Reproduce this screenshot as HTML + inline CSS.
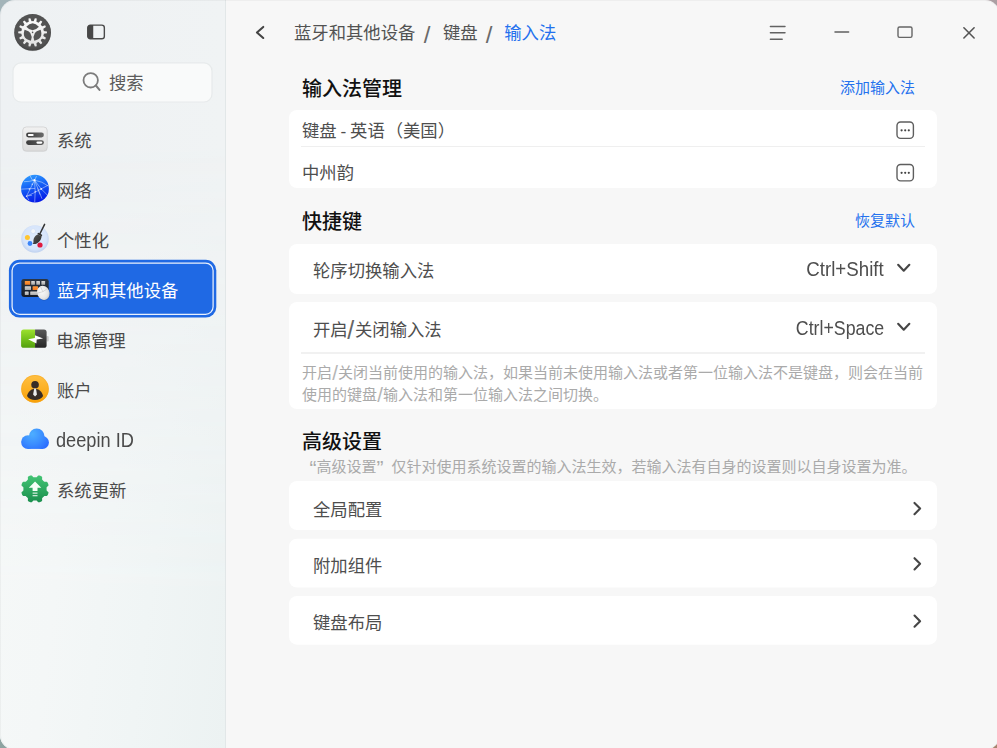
<!DOCTYPE html>
<html lang="zh-CN">
<head>
<meta charset="utf-8">
<title>控制中心</title>
<style>
*{box-sizing:border-box;margin:0;padding:0}
html,body{width:997px;height:748px;overflow:hidden}
body{position:relative;background:#a9a9a9;font-family:"Liberation Sans","Noto Sans CJK SC",sans-serif;color:#414141;font-size:17.33px}
.abs{position:absolute}
#sidebar{position:absolute;left:0;top:0;width:226px;height:750.3px;border-radius:15px 0 0 15px;background:linear-gradient(90deg,#eef1f3,#f0f3f4);border-right:1px solid #e2e7e8;overflow:hidden}
#sidebar i{position:absolute;left:0;top:0;width:225px;height:100%;background:linear-gradient(97deg,#f6f9f8 0%,#f4f7f7 40%,#f0f5f5 70%,#ecf2f2 100%);-webkit-mask-image:linear-gradient(to bottom,transparent 18%,#000 80%);mask-image:linear-gradient(to bottom,transparent 18%,#000 80%)}
#main{position:absolute;left:226px;top:0;width:774px;height:750.3px;border-radius:0 15px 15px 0;background:#f7f7f7}
.t{position:absolute;white-space:nowrap;line-height:24px;height:24px}
.nav{left:57px;font-size:17.33px;color:#4a4a4a}
.card{position:absolute;left:289px;width:648px;background:#fff;border-radius:8px}
.h{font-weight:500;font-size:20px;color:#111;left:302px}
.lnk{font-size:15px;color:#2471ee}
.row{font-size:17.33px;color:#4e4e4e}
.desc{font-size:15px;color:#aaa}
.bs{display:inline-block;font-size:24px;line-height:0;position:relative;top:3.5px;color:#6a6a6a}
.lat{transform-origin:right 19px}
.q{display:inline-block;width:15px;font-size:21px;line-height:0;position:relative;top:2.5px}
.sl{display:inline-block;font-size:20.5px;line-height:0;position:relative;top:2.2px;margin:0 .15px;color:#b6b6b6}
.line{position:absolute;height:1px;background:#ececec}
</style>
</head>
<body>
<!-- window corners (desktop wallpaper showing through) -->
<div class="abs" style="left:0;top:0;width:30px;height:30px;background:#a3b4b9"></div>
<div class="abs" style="right:0;top:0;width:30px;height:30px;background:#ab9fa3"></div>
<div class="abs" style="left:0;bottom:0;width:30px;height:30px;background:#8da3a1"></div>
<div class="abs" style="right:0;bottom:0;width:30px;height:30px;background:#a8846f"></div>
<div id="sidebar"><i></i></div>
<div id="main"></div>
<div class="abs" style="left:0;top:0;width:1000px;height:750.3px;border-radius:15px;border:1px solid rgba(0,0,0,.035)"></div>

<!-- sidebar toggle -->
<svg class="abs" style="left:87px;top:24px" width="20" height="17" viewBox="0 -0.4 20 17">
  <rect x="0.75" y="0.75" width="16.6" height="13.6" rx="2.6" fill="none" stroke="#4a4a4a" stroke-width="1.4"/>
  <path d="M0.75 3.2 a2.5 2.5 0 0 1 2.5-2.5 h3 v13.6 h-3 a2.5 2.5 0 0 1-2.5-2.5z" fill="#474747"/>
</svg>

<!-- search -->
<svg class="abs" style="left:0px;top:55px" width="226" height="55" viewBox="0 55 226 55"><rect x="13" y="62.9" width="199" height="39.1" rx="8" fill="#f9fafa" stroke="#e7eaeb" stroke-width="1.2"/></svg>
<svg class="abs" style="left:80px;top:70px" width="22" height="22" viewBox="0 0 22 22"><circle cx="10.7" cy="10.3" r="7.2" fill="none" stroke="#7c7c7c" stroke-width="1.8"/><path d="M15.9 15.5 L19.5 19.9" stroke="#7c7c7c" stroke-width="2" stroke-linecap="round"/></svg>
<div class="t" style="left:109px;top:71px;font-size:17.33px;color:#5c5c5c">搜索</div>

<!-- nav -->
<svg class="abs" style="left:0px;top:250px" width="226" height="80" viewBox="0 250 226 80">
<rect x="8.9" y="259.8" width="207.4" height="57.8" rx="10.6" fill="#1f69e4"/>
<rect x="12.1" y="263" width="201" height="51.4" rx="7.6" fill="none" stroke="#fff" stroke-opacity="0.9" stroke-width="1.25"/>
</svg>

<div class="t nav" style="top:129px">系统</div>
<div class="t nav" style="top:179px">网络</div>
<div class="t nav" style="top:229px">个性化</div>
<div class="t nav" style="top:279px;color:#fff">蓝牙和其他设备</div>
<div class="t nav" style="top:329px;left:56.3px">电源管理</div>
<div class="t nav" style="top:379px">账户</div>
<div class="t nav" style="top:429px;left:56.4px;transform:scale(1.05,1.2);transform-origin:left 18px">deepin ID</div>
<div class="t nav" style="top:479px">系统更新</div>

<!-- ICONS-START -->
<svg class="abs" style="left:12px;top:12px" width="41" height="41" viewBox="-0.6 -0.4 41 41">
<defs><radialGradient id="ag" cx="50%" cy="45%" r="55%"><stop offset="0" stop-color="#595959"/><stop offset="0.85" stop-color="#525252"/><stop offset="1" stop-color="#444"/></radialGradient>
<linearGradient id="aw" x1="0" y1="0" x2="0" y2="1"><stop offset="0" stop-color="#fbfbfb"/><stop offset="1" stop-color="#e4e4e4"/></linearGradient></defs>
<circle cx="20" cy="20.6" r="18.3" fill="#000" opacity="0.10"/>
<circle cx="20" cy="20" r="18.4" fill="url(#ag)"/>
<path d="M20.98 9.14 L22.25 5.78 L24.14 6.21 L23.83 9.80 L25.59 10.64 L28.20 8.16 L29.72 9.37 L27.88 12.47 L29.10 14.00 L32.52 12.89 L33.36 14.64 L30.37 16.63 L30.80 18.54 L34.37 19.03 L34.37 20.97 L30.80 21.46 L30.37 23.37 L33.36 25.36 L32.52 27.11 L29.10 26.00 L27.88 27.53 L29.72 30.63 L28.20 31.84 L25.59 29.36 L23.83 30.20 L24.14 33.79 L22.25 34.22 L20.98 30.86 L19.02 30.86 L17.75 34.22 L15.86 33.79 L16.17 30.20 L14.41 29.36 L11.80 31.84 L10.28 30.63 L12.12 27.53 L10.90 26.00 L7.48 27.11 L6.64 25.36 L9.63 23.37 L9.20 21.46 L5.63 20.97 L5.63 19.03 L9.20 18.54 L9.63 16.63 L6.64 14.64 L7.48 12.89 L10.90 14.00 L12.12 12.47 L10.28 9.37 L11.80 8.16 L14.41 10.64 L16.17 9.80 L15.86 6.21 L17.75 5.78 L19.02 9.14Z" fill="url(#aw)"/>
<circle cx="20" cy="20" r="11.2" fill="url(#aw)"/>
<g fill="#555">
<path d="M13.7 14.4 Q20 7.2 26.3 14.4 Q20 21.4 13.7 14.4Z"/>
<path d="M13.7 14.4 Q20 7.2 26.3 14.4 Q20 21.4 13.7 14.4Z" transform="rotate(120 20 20)"/>
<path d="M13.7 14.4 Q20 7.2 26.3 14.4 Q20 21.4 13.7 14.4Z" transform="rotate(240 20 20)"/>
<circle cx="20" cy="20" r="0.8"/>
</g>
</svg>
<svg class="abs" style="left:20px;top:124px" width="30" height="30" viewBox="0 0 30 30">
<defs><linearGradient id="sg" x1="0" y1="0" x2="0" y2="1"><stop offset="0" stop-color="#f1f1f1"/><stop offset="1" stop-color="#dcdcdc"/></linearGradient>
<linearGradient id="sp" x1="0" y1="0" x2="1" y2="0"><stop offset="0" stop-color="#3c3c3c"/><stop offset="1" stop-color="#6a6a6a"/></linearGradient>
<linearGradient id="sp2" x1="0" y1="0" x2="1" y2="0"><stop offset="0" stop-color="#3c3c3c"/><stop offset="1" stop-color="#5c5c5c"/></linearGradient></defs>
<rect x="2.4" y="2.9" width="25.2" height="24.8" rx="4" fill="#000" opacity="0.07"/>
<rect x="2.75" y="2.95" width="24.4" height="24.1" rx="3.6" fill="url(#sg)" stroke="#cdcdcd" stroke-width="0.7"/>
<rect x="6.1" y="8.6" width="17.8" height="4.8" rx="2.4" fill="url(#sp)"/>
<rect x="7.8" y="9.9" width="5.9" height="2.2" rx="1.1" fill="#fff"/>
<rect x="6.1" y="16.2" width="17.8" height="4.8" rx="2.4" fill="url(#sp2)"/>
<rect x="16.4" y="17.5" width="5.9" height="2.2" rx="1.1" fill="#fff"/>
</svg>
<svg class="abs" style="left:20px;top:173px" width="31" height="31" viewBox="0 -0.7 31 31">
<defs><linearGradient id="ng" x1="0.3" y1="0" x2="0.6" y2="1"><stop offset="0" stop-color="#2f9bff"/><stop offset="0.45" stop-color="#135cf5"/><stop offset="1" stop-color="#0316e6"/></linearGradient>
<clipPath id="nc"><circle cx="15" cy="15" r="13.9"/></clipPath></defs>
<circle cx="15" cy="15" r="13.9" fill="url(#ng)"/>
<g clip-path="url(#nc)" fill="none" stroke="#fff" stroke-width="0.55" opacity="0.8">
<path d="M14.5 6.5 L6.5 22.5"/>
<path d="M14.5 6.5 L22 25"/>
<path d="M14.5 6.5 L15.2 18 L14.7 29"/>
<path d="M14.5 6.5 L21.2 15.2 L28 22"/>
<path d="M21.2 15.2 Q13 20 6.5 22.5"/>
<path d="M21.2 15.2 L29 11"/>
<path d="M14.5 6.5 Q22 7.5 28.5 12.5"/>
<path d="M1 15.5 Q8 15 15 14.8"/>
<path d="M10 2 L12.5 6.5 L14.5 6.5 L16.5 2.5"/>
<path d="M4 8 Q9 8 14.5 6.5"/>
<path d="M6.5 22.5 L9 26.5"/>
<path d="M6.5 22.5 L12 21.5"/>
<path d="M17.6 14.5 L20 21"/>
</g>
<g fill="#fff"><circle cx="14.5" cy="6.5" r="1.1" opacity="0.95"/><circle cx="21.2" cy="15.2" r="0.9" opacity="0.85"/><circle cx="9.4" cy="15.3" r="0.8" opacity="0.8"/><circle cx="12.2" cy="10.6" r="0.7" opacity="0.7"/><circle cx="15.2" cy="18" r="0.7" opacity="0.7"/><circle cx="6.5" cy="22.5" r="0.7" opacity="0.7"/></g>
</svg>
<svg class="abs" style="left:20px;top:222px" width="30" height="32" viewBox="0 0 30 32">
<defs><radialGradient id="pg" cx="50%" cy="45%" r="52%"><stop offset="0" stop-color="#e0ecfd"/><stop offset="0.8" stop-color="#d7e5fb"/><stop offset="1" stop-color="#c4d5f1"/></radialGradient>
<linearGradient id="pb" x1="0" y1="0" x2="1" y2="1"><stop offset="0" stop-color="#555"/><stop offset="1" stop-color="#2c2c2c"/></linearGradient></defs>
<circle cx="15" cy="17" r="13.8" fill="url(#pg)"/>
<circle cx="13.2" cy="9.2" r="2.4" fill="#f4f7fb" stroke="#cbd9f0" stroke-width="0.5"/>
<circle cx="7.4" cy="15.4" r="2.5" fill="#ffc530"/>
<circle cx="10" cy="21.5" r="2.4" fill="#3b84f8"/>
<circle cx="20" cy="23" r="2.6" fill="#e01a3f"/>
<path d="M24.6 2.4 L19.8 12" stroke="#333" stroke-width="1.5" stroke-linecap="round"/>
<path d="M18.4 11.8 L21.3 13.2" stroke="#333" stroke-width="1.8" stroke-linecap="round"/>
<path d="M18 12.4 C14.2 13.6 13.2 17.4 13.5 20 C13.4 21 12.7 21.5 13 21.9 C17.3 22.6 21 19.2 21.6 14.2 Z" fill="url(#pb)"/>
</svg>
<svg class="abs" style="left:20px;top:276px" width="32" height="26" viewBox="0 0 32 26">
<defs><linearGradient id="kg" x1="0" y1="0" x2="0" y2="1"><stop offset="0" stop-color="#2c3644"/><stop offset="1" stop-color="#161c26"/></linearGradient>
<linearGradient id="ko" x1="0" y1="0" x2="0" y2="1"><stop offset="0" stop-color="#ff9a3c"/><stop offset="1" stop-color="#f47a20"/></linearGradient>
<linearGradient id="kk" x1="0" y1="0" x2="0" y2="1"><stop offset="0" stop-color="#d9d9d9"/><stop offset="1" stop-color="#a9a9a9"/></linearGradient>
<radialGradient id="km" cx="40%" cy="35%" r="70%"><stop offset="0" stop-color="#fbfbfb"/><stop offset="0.7" stop-color="#e6e6e6"/><stop offset="1" stop-color="#c9c9c9"/></radialGradient></defs>
<rect x="1.4" y="2.9" width="27.3" height="18.1" rx="2.4" fill="url(#kg)"/>
<rect x="4.8" y="5" width="5.4" height="3.8" rx="0.5" fill="url(#ko)"/>
<rect x="11.2" y="5" width="3.7" height="3.8" rx="0.5" fill="url(#kk)"/>
<rect x="16.3" y="5" width="3.7" height="3.8" rx="0.5" fill="url(#kk)"/>
<rect x="21.4" y="5" width="3.7" height="3.8" rx="0.5" fill="url(#kk)"/>
<rect x="4.8" y="10.2" width="6.2" height="3.8" rx="0.5" fill="url(#kk)"/>
<rect x="12.6" y="10.2" width="5.4" height="3.8" rx="0.5" fill="url(#ko)"/>
<rect x="4.8" y="15.5" width="3.9" height="3.6" rx="0.5" fill="url(#kk)"/>
<rect x="10.2" y="15.5" width="8" height="3.6" rx="0.5" fill="url(#kk)"/>
<g transform="rotate(-24 23.3 16.8)">
<ellipse cx="23.3" cy="17.4" rx="6.2" ry="7.4" fill="#000" opacity="0.16"/>
<ellipse cx="23.3" cy="16.8" rx="6.1" ry="7.3" fill="url(#km)"/>
<path d="M17.4 14.6 Q23.3 16.6 29.2 14.6 M23.3 9.6 V15.6" stroke="#c4c4c4" stroke-width="0.55" fill="none"/>
</g>
</svg>
<svg class="abs" style="left:20px;top:328px" width="30" height="22" viewBox="0 0 30 22">
<defs><linearGradient id="bg1" x1="0" y1="0" x2="0" y2="1"><stop offset="0" stop-color="#a2e531"/><stop offset="0.5" stop-color="#74c11b"/><stop offset="1" stop-color="#4c970c"/></linearGradient>
<linearGradient id="bg2" x1="0" y1="0" x2="0" y2="1"><stop offset="0" stop-color="#5d5d5d"/><stop offset="1" stop-color="#1f1f1f"/></linearGradient>
<clipPath id="bc"><rect x="1.1" y="1.6" width="25.5" height="18.2" rx="2.6"/></clipPath></defs>
<rect x="26.3" y="7.9" width="2.4" height="5.6" rx="1" fill="#c8c8c8"/>
<g clip-path="url(#bc)"><rect x="0" y="0" width="15.05" height="22" fill="url(#bg1)"/><rect x="15.05" y="0" width="13" height="22" fill="url(#bg2)"/></g>
<path d="M15.05 7.2 L23.1 10.4 L16.7 11.4 L16.4 15.5 L8.1 11.3 L14.9 9.9 Z" fill="#fff"/>
</svg>
<svg class="abs" style="left:20px;top:373px" width="31" height="31" viewBox="0 -0.9 31 31">
<defs><linearGradient id="acg" x1="0" y1="0" x2="0" y2="1"><stop offset="0" stop-color="#ffc043"/><stop offset="1" stop-color="#f9a106"/></linearGradient></defs>
<circle cx="15" cy="15" r="13.8" fill="url(#acg)"/>
<circle cx="15" cy="15" r="13.5" fill="none" stroke="#f2a21c" stroke-width="0.6" opacity="0.7"/>
<circle cx="15.05" cy="10.8" r="3.8" fill="#382d27"/>
<path d="M7 22.2 C8 17.6 11.5 14.9 15.05 14.9 C18.6 14.9 22.1 17.6 23.1 22.2 C21.6 24.7 18.4 26.1 15.05 26.1 C11.7 26.1 8.5 24.7 7 22.2 Z" fill="#382d27"/>
<path d="M14.2 14.6 L15.9 14.6 L17 20.6 L15.05 22.6 L13.1 20.6 Z" fill="#ececec"/>
</svg>
<svg class="abs" style="left:20px;top:427px" width="30" height="24" viewBox="0 0 30 24">
<defs><radialGradient id="cg" gradientUnits="userSpaceOnUse" cx="12.5" cy="7" r="21"><stop offset="0" stop-color="#4daeff"/><stop offset="0.5" stop-color="#3b8dff"/><stop offset="1" stop-color="#2664ff"/></radialGradient></defs>
<g fill="url(#cg)"><circle cx="7.95" cy="15.05" r="6.85"/><circle cx="16.7" cy="9.35" r="7.75"/><circle cx="22.5" cy="15.45" r="6.45"/><rect x="7.95" y="12" width="14.55" height="9.9"/></g>
</svg>
<svg class="abs" style="left:20px;top:473px" width="31" height="31" viewBox="0 -0.9 31 31">
<defs><linearGradient id="ug" x1="0" y1="0" x2="0" y2="1"><stop offset="0" stop-color="#43c474"/><stop offset="1" stop-color="#1b8f4e"/></linearGradient></defs>
<path d="M15.00 3.40 L15.30 3.40 L15.61 3.41 L15.91 3.41 L16.22 3.40 L16.54 3.34 L16.88 3.14 L17.28 2.69 L17.74 2.10 L18.20 1.69 L18.61 1.54 L18.99 1.54 L19.35 1.61 L19.70 1.72 L20.05 1.84 L20.40 1.97 L20.73 2.12 L21.07 2.28 L21.39 2.46 L21.70 2.66 L21.97 2.93 L22.15 3.33 L22.18 3.94 L22.09 4.69 L22.06 5.29 L22.16 5.67 L22.34 5.94 L22.55 6.16 L22.77 6.37 L22.99 6.58 L23.20 6.80 L23.42 7.01 L23.63 7.23 L23.84 7.45 L24.06 7.66 L24.33 7.84 L24.71 7.94 L25.31 7.91 L26.06 7.82 L26.67 7.85 L27.07 8.03 L27.34 8.30 L27.54 8.61 L27.72 8.93 L27.88 9.27 L28.03 9.60 L28.16 9.95 L28.28 10.30 L28.39 10.65 L28.46 11.01 L28.46 11.39 L28.31 11.80 L27.90 12.26 L27.31 12.72 L26.86 13.12 L26.66 13.46 L26.60 13.78 L26.59 14.09 L26.59 14.39 L26.60 14.70 L26.60 15.00 L26.60 15.30 L26.59 15.61 L26.59 15.91 L26.60 16.22 L26.66 16.54 L26.86 16.88 L27.31 17.28 L27.90 17.74 L28.31 18.20 L28.46 18.61 L28.46 18.99 L28.39 19.35 L28.28 19.70 L28.16 20.05 L28.03 20.40 L27.88 20.73 L27.72 21.07 L27.54 21.39 L27.34 21.70 L27.07 21.97 L26.67 22.15 L26.06 22.18 L25.31 22.09 L24.71 22.06 L24.33 22.16 L24.06 22.34 L23.84 22.55 L23.63 22.77 L23.42 22.99 L23.20 23.20 L22.99 23.42 L22.77 23.63 L22.55 23.84 L22.34 24.06 L22.16 24.33 L22.06 24.71 L22.09 25.31 L22.18 26.06 L22.15 26.67 L21.97 27.07 L21.70 27.34 L21.39 27.54 L21.07 27.72 L20.73 27.88 L20.40 28.03 L20.05 28.16 L19.70 28.28 L19.35 28.39 L18.99 28.46 L18.61 28.46 L18.20 28.31 L17.74 27.90 L17.28 27.31 L16.88 26.86 L16.54 26.66 L16.22 26.60 L15.91 26.59 L15.61 26.59 L15.30 26.60 L15.00 26.60 L14.70 26.60 L14.39 26.59 L14.09 26.59 L13.78 26.60 L13.46 26.66 L13.12 26.86 L12.72 27.31 L12.26 27.90 L11.80 28.31 L11.39 28.46 L11.01 28.46 L10.65 28.39 L10.30 28.28 L9.95 28.16 L9.60 28.03 L9.27 27.88 L8.93 27.72 L8.61 27.54 L8.30 27.34 L8.03 27.07 L7.85 26.67 L7.82 26.06 L7.91 25.31 L7.94 24.71 L7.84 24.33 L7.66 24.06 L7.45 23.84 L7.23 23.63 L7.01 23.42 L6.80 23.20 L6.58 22.99 L6.37 22.77 L6.16 22.55 L5.94 22.34 L5.67 22.16 L5.29 22.06 L4.69 22.09 L3.94 22.18 L3.33 22.15 L2.93 21.97 L2.66 21.70 L2.46 21.39 L2.28 21.07 L2.12 20.73 L1.97 20.40 L1.84 20.05 L1.72 19.70 L1.61 19.35 L1.54 18.99 L1.54 18.61 L1.69 18.20 L2.10 17.74 L2.69 17.28 L3.14 16.88 L3.34 16.54 L3.40 16.22 L3.41 15.91 L3.41 15.61 L3.40 15.30 L3.40 15.00 L3.40 14.70 L3.41 14.39 L3.41 14.09 L3.40 13.78 L3.34 13.46 L3.14 13.12 L2.69 12.72 L2.10 12.26 L1.69 11.80 L1.54 11.39 L1.54 11.01 L1.61 10.65 L1.72 10.30 L1.84 9.95 L1.97 9.60 L2.12 9.27 L2.28 8.93 L2.46 8.61 L2.66 8.30 L2.93 8.03 L3.33 7.85 L3.94 7.82 L4.69 7.91 L5.29 7.94 L5.67 7.84 L5.94 7.66 L6.16 7.45 L6.37 7.23 L6.58 7.01 L6.80 6.80 L7.01 6.58 L7.23 6.37 L7.45 6.16 L7.66 5.94 L7.84 5.67 L7.94 5.29 L7.91 4.69 L7.82 3.94 L7.85 3.33 L8.03 2.93 L8.30 2.66 L8.61 2.46 L8.93 2.28 L9.27 2.12 L9.60 1.97 L9.95 1.84 L10.30 1.72 L10.65 1.61 L11.01 1.54 L11.39 1.54 L11.80 1.69 L12.26 2.10 L12.72 2.69 L13.12 3.14 L13.46 3.34 L13.78 3.40 L14.09 3.41 L14.39 3.41 L14.70 3.40Z" fill="url(#ug)"/>
<path d="M15.05 7.5 L21.3 13.8 L17.5 13.8 L17.5 17.1 L12.6 17.1 L12.6 13.8 L8.8 13.8 Z" fill="#f6fff8"/>
<rect x="12.6" y="18.6" width="4.9" height="1.3" fill="#fff" opacity="0.75"/>
<rect x="12.6" y="21.1" width="4.9" height="1.3" fill="#fff" opacity="0.75"/>
</svg>
<!-- ICONS-END -->

<!-- title bar -->
<svg class="abs" style="left:254px;top:24px" width="14" height="16" viewBox="0 0 14 16"><path d="M9.25 2.95 L2.95 8.45 L9.25 13.95" fill="none" stroke="#444" stroke-width="2.1" stroke-linecap="round" stroke-linejoin="round"/></svg>
<div class="t" style="left:294px;top:21px;font-size:17.33px;color:#525252">蓝牙和其他设备<span class="bs" style="margin:0 12.5px 0 8.5px">/</span>键盘<span class="bs" style="margin:0 12px 0 8px">/</span><span style="color:#2471ee">输入法</span></div>

<svg class="abs" style="left:768px;top:23px" width="19" height="19" viewBox="0 -0.6 19 19"><path d="M2.4 2.8H17 M2.4 9.2H17 M2.4 15.6H14.2" stroke="#626262" stroke-width="1.45" stroke-linecap="round"/></svg>
<svg class="abs" style="left:833px;top:23px" width="19" height="19" viewBox="0 -0.5 19 19"><path d="M2 8.6H15.6" stroke="#606060" stroke-width="1.5" stroke-linecap="round"/></svg>
<svg class="abs" style="left:896px;top:23px" width="18" height="18" viewBox="0 0 18 18"><rect x="2" y="4" width="14" height="10.4" rx="1.6" fill="none" stroke="#666" stroke-width="1.4"/></svg>
<svg class="abs" style="left:960px;top:24px" width="19" height="19" viewBox="-0.5 -0.4 19 19"><path d="M3.4 3.4 L13.6 13.6 M13.6 3.4 L3.4 13.6" stroke="#555" stroke-width="1.6" stroke-linecap="round"/></svg>

<!-- section 1 -->
<div class="t h" style="top:77px">输入法管理</div>
<div class="t lnk" style="left:840px;top:76px">添加输入法</div>
<div class="card" style="top:110px;height:78px"></div>
<div class="t row" style="left:302px;top:119px"><span style="word-spacing:-1px">键盘 - 英语</span><span style="margin-left:1px">（美国）</span></div>
<div class="line" style="left:301px;top:146px;width:624px;background:#efefef"></div>
<div class="t row" style="left:302px;top:161px">中州韵</div>
<svg class="abs" style="left:896px;top:121px" width="20" height="20" viewBox="0 0 20 20"><rect x="1" y="1" width="16.4" height="16.4" rx="3.6" fill="none" stroke="#5e5e5e" stroke-width="1.4"/><circle cx="5.6" cy="9.3" r="1.1" fill="#444"/><circle cx="9.2" cy="9.3" r="1.1" fill="#444"/><circle cx="12.8" cy="9.3" r="1.1" fill="#444"/></svg>
<svg class="abs" style="left:896px;top:163px" width="21" height="21" viewBox="0 -0.5 21 21"><rect x="1" y="1" width="16.4" height="16.4" rx="3.6" fill="none" stroke="#5e5e5e" stroke-width="1.4"/><circle cx="5.6" cy="9.3" r="1.1" fill="#444"/><circle cx="9.2" cy="9.3" r="1.1" fill="#444"/><circle cx="12.8" cy="9.3" r="1.1" fill="#444"/></svg>

<!-- section 2 -->
<div class="t h" style="top:210px">快捷键</div>
<div class="t lnk" style="left:855px;top:209px">恢复默认</div>
<div class="card" style="top:244px;height:50px"></div>
<div class="t row" style="left:313px;top:259px">轮序切换输入法</div>
<div class="t row lat" style="right:113px;top:258px;transform:scale(1.08,1.17)">Ctrl+Shift</div>
<svg class="abs" style="left:896px;top:261px" width="17" height="15" viewBox="0 0 17 15"><path d="M2.15 3.75 L7.75 9.75 L13.35 3.75" fill="none" stroke="#464646" stroke-width="2.1" stroke-linecap="round" stroke-linejoin="round"/></svg>

<div class="card" style="top:302px;height:107px"></div>
<div class="t row" style="left:313px;top:318px">开启<span class="bs" style="margin:0 0.8px 0 -0.4px;color:#666;font-size:25px;top:2.8px">/</span>关闭输入法</div>
<div class="t row lat" style="right:113px;top:317px;transform:scale(1.025,1.17)">Ctrl+Space</div>
<svg class="abs" style="left:896px;top:320px" width="17" height="15" viewBox="0 0 17 15"><path d="M2.15 3.75 L7.75 9.75 L13.35 3.75" fill="none" stroke="#464646" stroke-width="2.1" stroke-linecap="round" stroke-linejoin="round"/></svg>
<div class="line" style="left:301px;top:352px;width:624px;height:2px;background:#f1f1f1"></div>
<div class="t desc" style="left:302px;top:361px">开启<span class="sl">/</span>关闭当前使用的输入法，如果当前未使用输入法或者第一位输入法不是键盘，则会在当前</div>
<div class="t desc" style="left:302px;top:383px">使用的键盘<span class="sl">/</span>输入法和第一位输入法之间切换。</div>

<!-- section 3 -->
<div class="t h" style="top:430px">高级设置</div>
<div class="t desc" style="left:302px;top:455px"><span class="q" style="text-align:right;width:14.4px">“</span>高级设置<span class="q" style="text-align:left">”</span>仅针对使用系统设置的输入法生效，若输入法有自身的设置则以自身设置为准。</div>
<div class="card" style="top:481px;height:49px"></div>
<div class="t row" style="left:313px;top:498px">全局配置</div>
<svg class="abs" style="left:289px;top:538px" width="648" height="50" viewBox="0 538 648 50"><rect x="0" y="538.7" width="648" height="48.8" rx="8" fill="#fff"/></svg>
<div class="t row" style="left:313px;top:554px">附加组件</div>
<svg class="abs" style="left:289px;top:595px" width="648" height="51" viewBox="0 595 648 51"><rect x="0" y="596" width="648" height="48.7" rx="8" fill="#fff"/></svg>
<div class="t row" style="left:313px;top:611px">键盘布局</div>
<svg class="abs" style="left:910px;top:500px" width="14" height="18" viewBox="-0.6 0 14 18"><path d="M3.9 2.95 L9.5 8.55 L3.9 14.15" fill="none" stroke="#464646" stroke-width="2.1" stroke-linecap="round" stroke-linejoin="round"/></svg>
<svg class="abs" style="left:910px;top:555px" width="14" height="18" viewBox="-0.6 -0.25 14 18"><path d="M3.9 2.95 L9.5 8.55 L3.9 14.15" fill="none" stroke="#464646" stroke-width="2.1" stroke-linecap="round" stroke-linejoin="round"/></svg>
<svg class="abs" style="left:910px;top:612px" width="14" height="18" viewBox="-0.6 -0.6 14 18"><path d="M3.9 2.95 L9.5 8.55 L3.9 14.15" fill="none" stroke="#464646" stroke-width="2.1" stroke-linecap="round" stroke-linejoin="round"/></svg>

</body>
</html>
